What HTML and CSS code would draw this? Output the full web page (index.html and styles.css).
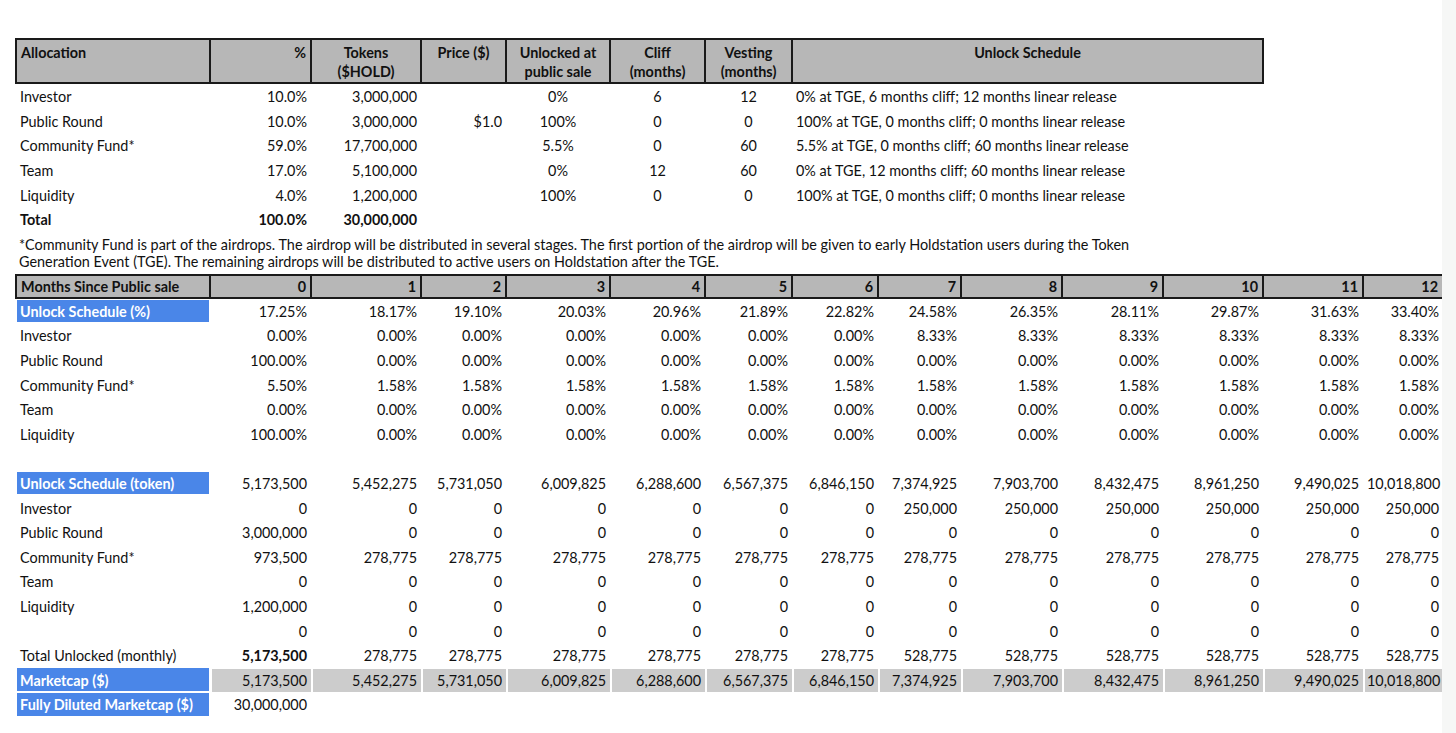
FILE: index.html
```html
<!DOCTYPE html>
<html lang="en">
<head>
<meta charset="utf-8">
<title>Token Allocation</title>
<link rel="stylesheet" href="styles.css">
</head>
<body>
<div class="page">
  <main class="sheet">
    <table class="grid alloc">
      <colgroup>
        <col class="c-label"><col class="c-0"><col class="c-1"><col class="c-2"><col class="c-3"><col class="c-4"><col class="c-5"><col class="c-sched">
      </colgroup>
      <thead>
        <tr class="hdr hdr-tall">
          <th class="l">Allocation</th>
          <th class="r">%</th>
          <th class="c">Tokens<br>($HOLD)</th>
          <th class="c">Price ($)</th>
          <th class="c">Unlocked at<br>public sale</th>
          <th class="c">Cliff<br>(months)</th>
          <th class="c">Vesting<br>(months)</th>
          <th class="c">Unlock Schedule</th>
        </tr>
      </thead>
      <tbody>
        <tr><td class="l">Investor</td><td class="r">10.0%</td><td class="r">3,000,000</td><td class="r"></td><td class="c">0%</td><td class="c">6</td><td class="c">12</td><td class="l">0% at TGE, 6 months cliff; 12 months linear release</td></tr>
        <tr><td class="l">Public Round</td><td class="r">10.0%</td><td class="r">3,000,000</td><td class="r">$1.0</td><td class="c">100%</td><td class="c">0</td><td class="c">0</td><td class="l">100% at TGE, 0 months cliff; 0 months linear release</td></tr>
        <tr><td class="l">Community Fund*</td><td class="r">59.0%</td><td class="r">17,700,000</td><td class="r"></td><td class="c">5.5%</td><td class="c">0</td><td class="c">60</td><td class="l">5.5% at TGE, 0 months cliff; 60 months linear release</td></tr>
        <tr><td class="l">Team</td><td class="r">17.0%</td><td class="r">5,100,000</td><td class="r"></td><td class="c">0%</td><td class="c">12</td><td class="c">60</td><td class="l">0% at TGE, 12 months cliff; 60 months linear release</td></tr>
        <tr><td class="l">Liquidity</td><td class="r">4.0%</td><td class="r">1,200,000</td><td class="r"></td><td class="c">100%</td><td class="c">0</td><td class="c">0</td><td class="l">100% at TGE, 0 months cliff; 0 months linear release</td></tr>
        <tr class="bold"><td class="l">Total</td><td class="r">100.0%</td><td class="r">30,000,000</td><td></td><td></td><td></td><td></td><td></td></tr>
      </tbody>
    </table>

    <p class="note">*Community Fund is part of the airdrops. The airdrop will be distributed in several stages. The first portion of the airdrop will be given to early Holdstation users during the Token<br>Generation Event (TGE). The remaining airdrops will be distributed to active users on Holdstation after the TGE.</p>

    <table class="grid sched">
      <colgroup>
        <col class="c-label"><col class="c-0"><col class="c-1"><col class="c-2"><col class="c-3"><col class="c-4"><col class="c-5"><col class="c-6"><col class="c-7"><col class="c-8"><col class="c-9"><col class="c-10"><col class="c-11"><col class="c-12">
      </colgroup>
      <thead>
        <tr class="hdr">
          <th class="l">Months Since Public sale</th>
          <th class="r">0</th><th class="r">1</th><th class="r">2</th><th class="r">3</th><th class="r">4</th><th class="r">5</th><th class="r">6</th><th class="r">7</th><th class="r">8</th><th class="r">9</th><th class="r">10</th><th class="r">11</th><th class="r">12</th>
        </tr>
      </thead>
      <tbody class="r">
        <tr><td class="blue">Unlock Schedule (%)</td><td>17.25%</td><td>18.17%</td><td>19.10%</td><td>20.03%</td><td>20.96%</td><td>21.89%</td><td>22.82%</td><td>24.58%</td><td>26.35%</td><td>28.11%</td><td>29.87%</td><td>31.63%</td><td>33.40%</td></tr>
        <tr><td class="l">Investor</td><td>0.00%</td><td>0.00%</td><td>0.00%</td><td>0.00%</td><td>0.00%</td><td>0.00%</td><td>0.00%</td><td>8.33%</td><td>8.33%</td><td>8.33%</td><td>8.33%</td><td>8.33%</td><td>8.33%</td></tr>
        <tr><td class="l">Public Round</td><td>100.00%</td><td>0.00%</td><td>0.00%</td><td>0.00%</td><td>0.00%</td><td>0.00%</td><td>0.00%</td><td>0.00%</td><td>0.00%</td><td>0.00%</td><td>0.00%</td><td>0.00%</td><td>0.00%</td></tr>
        <tr><td class="l">Community Fund*</td><td>5.50%</td><td>1.58%</td><td>1.58%</td><td>1.58%</td><td>1.58%</td><td>1.58%</td><td>1.58%</td><td>1.58%</td><td>1.58%</td><td>1.58%</td><td>1.58%</td><td>1.58%</td><td>1.58%</td></tr>
        <tr><td class="l">Team</td><td>0.00%</td><td>0.00%</td><td>0.00%</td><td>0.00%</td><td>0.00%</td><td>0.00%</td><td>0.00%</td><td>0.00%</td><td>0.00%</td><td>0.00%</td><td>0.00%</td><td>0.00%</td><td>0.00%</td></tr>
        <tr><td class="l">Liquidity</td><td>100.00%</td><td>0.00%</td><td>0.00%</td><td>0.00%</td><td>0.00%</td><td>0.00%</td><td>0.00%</td><td>0.00%</td><td>0.00%</td><td>0.00%</td><td>0.00%</td><td>0.00%</td><td>0.00%</td></tr>
        <tr><td></td><td></td><td></td><td></td><td></td><td></td><td></td><td></td><td></td><td></td><td></td><td></td><td></td><td></td></tr>
        <tr><td class="blue">Unlock Schedule (token)</td><td>5,173,500</td><td>5,452,275</td><td>5,731,050</td><td>6,009,825</td><td>6,288,600</td><td>6,567,375</td><td>6,846,150</td><td>7,374,925</td><td>7,903,700</td><td>8,432,475</td><td>8,961,250</td><td>9,490,025</td><td>10,018,800</td></tr>
        <tr><td class="l">Investor</td><td>0</td><td>0</td><td>0</td><td>0</td><td>0</td><td>0</td><td>0</td><td>250,000</td><td>250,000</td><td>250,000</td><td>250,000</td><td>250,000</td><td>250,000</td></tr>
        <tr><td class="l">Public Round</td><td>3,000,000</td><td>0</td><td>0</td><td>0</td><td>0</td><td>0</td><td>0</td><td>0</td><td>0</td><td>0</td><td>0</td><td>0</td><td>0</td></tr>
        <tr><td class="l">Community Fund*</td><td>973,500</td><td>278,775</td><td>278,775</td><td>278,775</td><td>278,775</td><td>278,775</td><td>278,775</td><td>278,775</td><td>278,775</td><td>278,775</td><td>278,775</td><td>278,775</td><td>278,775</td></tr>
        <tr><td class="l">Team</td><td>0</td><td>0</td><td>0</td><td>0</td><td>0</td><td>0</td><td>0</td><td>0</td><td>0</td><td>0</td><td>0</td><td>0</td><td>0</td></tr>
        <tr><td class="l">Liquidity</td><td>1,200,000</td><td>0</td><td>0</td><td>0</td><td>0</td><td>0</td><td>0</td><td>0</td><td>0</td><td>0</td><td>0</td><td>0</td><td>0</td></tr>
        <tr><td class="l"></td><td>0</td><td>0</td><td>0</td><td>0</td><td>0</td><td>0</td><td>0</td><td>0</td><td>0</td><td>0</td><td>0</td><td>0</td><td>0</td></tr>
        <tr><td class="l">Total Unlocked (monthly)</td><td class="b">5,173,500</td><td>278,775</td><td>278,775</td><td>278,775</td><td>278,775</td><td>278,775</td><td>278,775</td><td>528,775</td><td>528,775</td><td>528,775</td><td>528,775</td><td>528,775</td><td>528,775</td></tr>
        <tr class="mcap"><td class="blue">Marketcap ($)</td><td>5,173,500</td><td>5,452,275</td><td>5,731,050</td><td>6,009,825</td><td>6,288,600</td><td>6,567,375</td><td>6,846,150</td><td>7,374,925</td><td>7,903,700</td><td>8,432,475</td><td>8,961,250</td><td>9,490,025</td><td>10,018,800</td></tr>
        <tr><td class="blue">Fully Diluted Marketcap ($)</td><td>30,000,000</td><td></td><td></td><td></td><td></td><td></td><td></td><td></td><td></td><td></td><td></td><td></td><td></td></tr>
      </tbody>
    </table>
  </main>
  <aside class="edge"></aside>
</div>
</body>
</html>
```

FILE: styles.css
```css
html, body {
  margin: 0;
  padding: 0;
  background: #ffffff;
}

body {
  font-family: "Lato", "Open Sans", sans-serif;
  font-size: 14.4px;
  color: #111;
}

.page {
  display: flex;
  min-height: 733px;
}

.sheet {
  width: 1442px;
  padding: 38px 0 0 15px;
  box-sizing: border-box;
}

.edge {
  flex: 1;
  background: #f6f7f6;
}

.grid {
  border-collapse: collapse;
  table-layout: fixed;
}

.alloc { width: 1247px; }
.sched { width: 1427px; }

.c-label { width: 194px; }
.c-0 { width: 101px; }
.c-1 { width: 110px; }
.c-2 { width: 85px; }
.c-3 { width: 104px; }
.c-4 { width: 95px; }
.c-5 { width: 87px; }
.c-6 { width: 86px; }
.c-7 { width: 83px; }
.c-8 { width: 101px; }
.c-9 { width: 101px; }
.c-10 { width: 100px; }
.c-11 { width: 100px; }
.c-12 { width: 80px; }
.c-sched { width: 471px; }

th, td {
  padding: 0 4px;
  white-space: nowrap;
  overflow: visible;
}

td {
  height: 22.6px;
  padding-top: 2px;
  padding-bottom: 0;
  line-height: 18px;
  vertical-align: middle;
  font-weight: 400;
}

.l { text-align: left; }
.r { text-align: right; }
.c { text-align: center; }
.b, .bold td { font-weight: 700; }

.hdr th {
  background: #b7b7b7;
  border: 2px solid #1a1a1a;
  font-weight: 700;
  height: 21px;
  line-height: 19px;
  vertical-align: middle;
}

.hdr-tall th {
  height: 39px;
  vertical-align: top;
  padding-top: 3px;
}

.sched tbody td.l,
.sched tbody td.blue { text-align: left; }

.blue {
  background: #4a86e8;
  color: #ffffff;
  font-weight: 700;
  box-shadow: inset 0 0 0 1px #ffffff;
}

.mcap td {
  background: #cccccc;
  box-shadow: inset 1px 1px 0 1px #ffffff;
}

.mcap td.blue {
  background: #4a86e8;
  box-shadow: inset 0 0 0 1px #ffffff;
}

.note {
  margin: 4px 0 4px 0;
  padding-left: 4px;
  line-height: 17px;
  white-space: nowrap;
}
```
